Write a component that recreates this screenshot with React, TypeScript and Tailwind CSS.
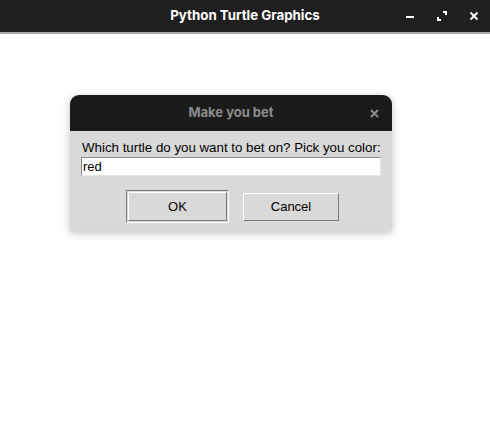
export default function App() {
  return (
    <div className="w-[490px] h-[427px] bg-white flex flex-col overflow-hidden" style={{ fontFamily: "Inter, 'Liberation Sans', sans-serif" }}>
      {/* Window title bar */}
      <div className="h-8 shrink-0 bg-[#1f1f1f] flex items-center relative">
        <div className="flex-1 text-center text-white text-[13.3px] font-bold">Python Turtle Graphics</div>
        <div className="absolute right-0 top-0 h-8 flex items-center">
          <span className="w-8 flex justify-center">
            <svg width="10" height="10" viewBox="0 0 10 10"><rect x="1" y="5" width="8" height="2" fill="#fff" /></svg>
          </span>
          <span className="w-8 flex justify-center">
            <svg width="10" height="10" viewBox="0 0 10 10" fill="none" stroke="#fff" strokeWidth="2">
              <path d="M1 10V6M1 9H4" />
              <path d="M9 0V4M9 1H6" />
            </svg>
          </span>
          <span className="w-8 flex justify-center">
            <svg width="10" height="10" viewBox="0 0 10 10" stroke="#fff" strokeWidth="2"><path d="M1.5 1.5L8.5 8.5M8.5 1.5L1.5 8.5" /></svg>
          </span>
        </div>
      </div>
      <div className="h-[2px] bg-[#a9a9a9] shrink-0" />

      <div className="flex-1 pt-[61px] pl-[70px]">
        {/* Dialog */}
        <div className="w-[322px] rounded-t-[9px] overflow-hidden shadow-[0_2px_8px_rgba(0,0,0,0.25)]">
          <div className="h-9 bg-[#1b1b1b] flex items-center relative">
            <div className="flex-1 text-center text-[#8c8c8c] text-[13px] font-bold">Make you bet</div>
            <svg className="absolute right-[13px] top-[14px]" width="9" height="9" viewBox="0 0 9 9" stroke="#8c8c8c" strokeWidth="2"><path d="M1 1L8 8M8 1L1 8" /></svg>
          </div>
          <div className="bg-[#d9d9d9] px-[11px] pt-[9px] pb-[8px]" style={{ fontFamily: "'Liberation Sans', Arial, sans-serif" }}>
            <div className="text-[13.3px] text-black leading-[16px] pl-[1px]">Which turtle do you want to bet on? Pick you color:</div>
            <div className="mt-[1px] h-[19px] w-[300px] bg-white border border-[#8a8a8a] border-r-[#e6e6e6] border-b-[#e6e6e6] text-[13px] leading-[17px] pl-[1px]">red</div>
            <div className="flex mt-[14px] pl-[45px] gap-[14px] items-center">
              <div className="border border-[#7a7a7a] border-r-white border-b-white p-[1px]">
                <div className="w-[99px] h-[29px] border border-white border-r-[#7a7a7a] border-b-[#7a7a7a] flex items-center justify-center text-[13px] pt-[1px]">OK</div>
              </div>
              <div className="w-[96px] h-[28px] border border-white border-r-[#7a7a7a] border-b-[#7a7a7a] flex items-center justify-center text-[13px] pt-[1px]">Cancel</div>
            </div>
          </div>
        </div>
      </div>
    </div>
  );
}
